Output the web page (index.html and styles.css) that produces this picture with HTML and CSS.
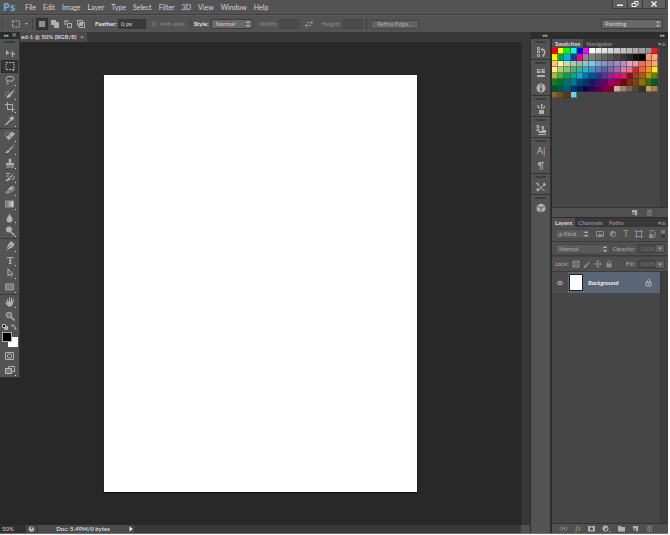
FILE: index.html
```html
<!DOCTYPE html>
<html lang="en">
<head>
<meta charset="utf-8">
<title>Photoshop</title>
<link rel="stylesheet" href="styles.css">
</head>
<body>
<div class="app">
  <header class="menubar">
    <span class="logo">Ps</span>
    <nav class="menus">
      <a href="#">File</a><a href="#">Edit</a><a href="#">Image</a><a href="#">Layer</a><a href="#">Type</a><a href="#">Select</a><a href="#">Filter</a><a href="#">3D</a><a href="#">View</a><a href="#">Window</a><a href="#">Help</a>
    </nav>
    <div class="winbtns">
      <button aria-label="Minimize"><svg width="8" height="8" viewBox="0 0 8 8"><path d="M1 4.500h6v1.500h-6z"/></svg></button>
      <button aria-label="Restore"><svg width="8" height="8" viewBox="0 0 8 8"><path class="ln" d="M3.500 3V1.500h3.500v3.500H5.500M1 3.500h4v3H1z"/></svg></button>
      <button class="close" aria-label="Close"><svg width="8" height="8" viewBox="0 0 8 8"><path class="ln thick" d="M1.500 1.500l5 5M6.500 1.500l-5 5"/></svg></button>
    </div>
  </header>

  <div class="options">
    <span class="grip"></span>
    <button class="preset" aria-label="Tool preset"><svg width="20" height="10" viewBox="0 0 20 10"><rect class="ln dash" x="3.500" y="2" width="7" height="6"/><path d="M16 4h3l-1.500 2z"/></svg></button>
    <span class="sep"></span>
    <div class="modes">
      <button class="on" aria-label="New selection"><svg width="8" height="8" viewBox="0 0 8 8"><rect class="gray" x="1" y="1" width="6" height="6"/></svg></button>
      <button aria-label="Add to selection"><svg width="8" height="8" viewBox="0 0 8 8"><path d="M0 0h5v2h3v6H3V5H0z"/></svg></button>
      <button aria-label="Subtract from selection"><svg width="8" height="8" viewBox="0 0 8 8"><path class="dim" d="M0 0h5v2H2.500v3H0z"/><path class="ln" d="M3.500 3.500h4v4h-4z"/></svg></button>
      <button aria-label="Intersect with selection"><svg width="8" height="8" viewBox="0 0 8 8"><path class="ln" d="M.500 .500h5v5h-5zM2.500 2.500h5v5h-5z"/><path d="M3 3h2v2H3z"/></svg></button>
    </div>
    <label class="strong" for="feather">Feather:</label>
    <input class="field feather" id="feather" type="text" value="0 px">
    <label class="check off"><input type="checkbox" disabled>Anti-alias</label>
    <span class="sep"></span>
    <label class="strong" for="style">Style:</label>
    <span class="drop style"><select id="style"><option>Normal</option></select></span>
    <label class="off" for="w">Width:</label>
    <input class="field size" id="w" type="text" disabled>
    <button class="swap" aria-label="Swap"><svg width="10" height="8" viewBox="0 0 10 8"><path class="ln dim" d="M3 2.500h5M2 5.500h5"/><path class="dim" d="M7 .500l2.500 2L7 4.500zM3 3.500L.500 5.500 3 7.500z"/></svg></button>
    <label class="off" for="h">Height:</label>
    <input class="field size" id="h" type="text" disabled>
    <span class="sep"></span>
    <button class="refine">Refine Edge...</button>
    <span class="drop workspace"><select aria-label="Workspace"><option>Painting</option></select></span>
  </div>

  <div class="work">
    <main class="doc">
      <div class="doctabs"><div class="doctab">ed-1 @ 50% (RGB/8)<button aria-label="Close tab">×</button></div></div>
      <div class="stage">
        <div class="canvas"><div class="paper"></div></div>
        <div class="vscroll"></div>
      </div>
      <div class="status">
        <span class="zoomlevel">50%</span>
        <span class="sicon"><svg width="7" height="6" viewBox="0 0 7 6"><circle cx="3.500" cy="3" r="2.800"/><path class="ink" d="M3.500 3V1h2"/></svg></span>
        <span class="info">Doc: 5.49M/0 bytes</span>
        <button class="play" aria-label="Status menu"><svg width="4" height="6" viewBox="0 0 4 6"><path d="M.500 .500L3.800 3 .500 5.500z"/></svg></button>
        <span class="corner"></span>
      </div>
    </main>

    <aside class="dock">
      <div class="strip"><span>◂◂</span></div>
      <div class="dgroup"><button aria-label="History"><svg width="10" height="10" viewBox="0 0 10 10"><path class="ln" d="M1.500 .500h2v2h-2zM1.500 4h2v1.500h-2zM1.500 7.500h2v2h-2z"/><path class="ln thick" d="M6 2.500c3.500-.500 3.500 4.500 .500 7"/><path d="M4.500 2.500L7 .500v4z"/></svg></button></div>
      <div class="dgroup"><button aria-label="Adjustments"><svg width="10" height="10" viewBox="0 0 10 10"><path d="M1 1h3.500v1H2v1h2.500v2H1zM5.500 1H9v1H7.500v1H9v2H5.500zM1 7h8v2H1z"/></svg></button>
        <button aria-label="Info"><svg width="10" height="10" viewBox="0 0 10 10"><circle cx="5" cy="5" r="4.500"/><path class="ink thick" d="M5 1.800v1.400M5 4.200v4"/></svg></button></div>
      <div class="dgroup"><button aria-label="Brushes"><svg width="10" height="10" viewBox="0 0 10 10"><path d="M3 6h5v4H3zM1 1l2 1 1 3-2-1zM5 0h1.500v5H5zM9.500 1.500L8 5H7l1-3z"/></svg></button></div>
      <div class="dgroup"><button aria-label="Clone source"><svg width="10" height="10" viewBox="0 0 10 10"><path class="ln" d="M1 .500h2v2H1zM1 4h2v2H1z"/><path d="M5.500 1h2.500l-.500 4H10v3H3V6h3zM2 9h8v1H2z"/></svg></button></div>
      <div class="dgroup"><button class="glyph" aria-label="Character">A|</button><button class="glyph" aria-label="Paragraph">¶</button></div>
      <div class="dgroup"><button aria-label="Tool presets"><svg width="10" height="10" viewBox="0 0 10 10"><path class="ln" d="M1 1.500l7.500 7.500M9 2L2 8.500"/><path d="M0 8l2-2 1.500 1.500L2 9.500zM7 1.500l2-1v1.500h1L9 4 7.500 4zM0 1l2-.500 1 2-1 1z"/></svg></button></div>
      <div class="dgroup"><button aria-label="3D"><svg width="10" height="10" viewBox="0 0 10 10"><path d="M5 .500l4.200 2L5 4.500l-4.200-2zM.700 3.200l3.800 2v4.300L.700 7.500zM9.300 3.200l-3.800 2v4.300l3.800-2z"/></svg></button></div>
    </aside>

    <aside class="panels">
      <div class="strip right"><span>▸▸</span></div>
      <section class="panel swatchpanel">
        <div class="tabs"><button class="tab active">Swatches</button><button class="tab">Navigator</button><button class="pmenu" aria-label="Panel menu">▾≡</button></div>
        <div class="pbody"><div class="swatches" id="swatches"></div><div class="pscroll"></div></div>
        <div class="pfoot">
          <button aria-label="New swatch"><svg width="7" height="7" viewBox="0 0 8 8"><path d="M1 1h6v6H4.500V4H1z"/><path d="M1 5h2.500v2z"/></svg></button>
          <button class="faded" aria-label="Delete swatch"><svg width="7" height="7" viewBox="0 0 8 8"><path class="ln" d="M1 2h6M3 1h2M2 3h4v4.500H2zM4 3v4"/></svg></button>
        </div>
      </section>
      <section class="panel layerpanel">
        <div class="tabs"><button class="tab active">Layers</button><button class="tab">Channels</button><button class="tab">Paths</button><button class="pmenu" aria-label="Panel menu">▾≡</button></div>
        <div class="lrow filter">
          <span class="drop kind"><select aria-label="Filter kind"><option>ρ Kind</option></select></span>
          <button aria-label="Pixel layers"><svg width="8" height="8" viewBox="0 0 8 8"><path class="ln" d="M.500 1.500h7v5h-7z"/><path d="M1.500 6l2-3 1 1.500 1-1L7 6z"/></svg></button>
          <button aria-label="Adjustment layers"><svg width="8" height="8" viewBox="0 0 8 8"><circle class="ln" cx="4" cy="4" r="2.800"/><path d="M2 6a2.800 2.800 0 0 1 4-4z"/></svg></button>
          <button class="tee" aria-label="Type layers">T</button>
          <button aria-label="Shape layers"><svg width="8" height="8" viewBox="0 0 8 8"><path class="ln" d="M1.500 0v8M6.500 0v8M0 1.500h8M0 6.500h8"/></svg></button>
          <button aria-label="Smart objects"><svg width="8" height="8" viewBox="0 0 8 8"><path class="ln" d="M2.500 3V.500h3l1.500 1.500v5H5"/><path d="M1 4h4v4H1z"/></svg></button>
          <button class="toggle" aria-label="Toggle filter"></button>
        </div>
        <div class="lrow blend">
          <span class="drop mode"><select aria-label="Blend mode"><option>Normal</option></select></span>
          <label class="fill" for="opacity">Opacity:</label>
          <span class="pct"><input id="opacity" type="text" value="100%" disabled><button aria-label="Opacity slider">▾</button></span>
        </div>
        <div class="lrow lock">
          <span>Lock:</span>
          <button aria-label="Lock pixels"><svg width="8" height="8" viewBox="0 0 8 8"><path class="ln" d="M1 1h6v6H1z"/><path d="M1 1h2v2H1zM5 1h2v2H5zM3 3h2v2H3zM1 5h2v2H1zM5 5h2v2H5z"/></svg></button>
          <button aria-label="Lock painting"><svg width="8" height="8" viewBox="0 0 8 8"><path d="M8 0L4.500 5.500 3 4.500zM2.500 4.500L4.500 6 2 8H0z"/></svg></button>
          <button aria-label="Lock position"><svg width="8" height="8" viewBox="0 0 8 8"><path class="ln" d="M4 1v6M1 4h6"/><path d="M4 0l1.500 2h-3zM4 8l1.500-2h-3zM0 4l2-1.500v3zM8 4L6 2.500v3z"/></svg></button>
          <button aria-label="Lock all"><svg width="8" height="8" viewBox="0 0 8 8"><path class="ln" d="M2.500 4V2.500a1.500 1.500 0 0 1 3 0V4"/><path d="M1.500 3.500h5v4h-5z"/></svg></button>
          <label class="fill" for="fill">Fill:</label>
          <span class="pct"><input id="fill" type="text" value="100%" disabled><button aria-label="Fill slider">▾</button></span>
        </div>
        <div class="pbody">
          <div class="layers">
            <div class="layer">
              <button class="eye" aria-label="Visibility"><svg width="8" height="6" viewBox="0 0 8 6"><path class="ln" d="M.500 3.500q3.500-4.500 7 0M1.500 4q2.500 2 5 0"/><circle class="gray" cx="4" cy="3" r="1.300"/></svg></button>
              <div class="lbody"><span class="thumb"></span><span class="lname">Background</span>
              <svg width="7" height="8" viewBox="0 0 7 8"><path class="ln" d="M2 3.500V2a1.500 1.500 0 0 1 3 0v1.500M1 3.500h5v3.500H1zM3.500 4.500v1.500"/></svg></div>
            </div>
          </div>
          <div class="pscroll"></div>
        </div>
        <div class="pfoot lfoot">
          <button class="faded" aria-label="Link"><svg width="9" height="7" viewBox="0 0 9 7"><path class="ln" d="M4 2H2.500a1.500 1.500 0 0 0 0 3H4M5 2h1.500a1.500 1.500 0 0 1 0 3H5M3 3.500h3"/></svg></button>
          <button class="faded fx" aria-label="Layer style">fx</button>
          <button aria-label="Mask"><svg width="7" height="7" viewBox="0 0 7 7"><path d="M0 1h7v5.500H0z"/><circle class="hole" cx="3.500" cy="3.700" r="1.500"/></svg></button>
          <button aria-label="Adjustment"><svg width="9" height="7" viewBox="0 0 9 7"><circle cx="3.500" cy="3.500" r="3"/><path class="hole" d="M5 2.200A2 2 0 0 1 2.200 5z"/><path d="M7.500 6h1v1h-1z"/></svg></button>
          <button aria-label="Group"><svg width="7" height="7" viewBox="0 0 7 7"><path d="M0 1h3l1 1h3v4.500H0z"/></svg></button>
          <button aria-label="New layer"><svg width="7" height="7" viewBox="0 0 8 8"><path d="M1 1h6v6H4.500V4H1z"/><path d="M1 5h2.500v2z"/></svg></button>
          <button class="faded" aria-label="Delete layer"><svg width="7" height="7" viewBox="0 0 8 8"><path class="ln" d="M1 2h6M3 1h2M2 3h4v4.500H2zM4 3v4"/></svg></button>
        </div>
      </section>
    </aside>

    <div class="tools">
      <div class="thead"><span>▸▸</span><button aria-label="Close tools">×</button></div>
      <div class="tgrip"></div>
      <div class="tgroup g6">
        <button class="plain" aria-label="Move"><svg width="12" height="10" viewBox="0 0 12 10"><path d="M2 2l4 3.500H4L2 7.500z"/><path class="ln" d="M8.500 3.500v5M6.500 6h4"/><path d="M8.500 3l1 1h-2zM8.500 9l1-1h-2zM11 6L10 5v2z"/></svg></button>
        <button class="on" aria-label="Marquee"><svg width="12" height="10" viewBox="0 0 12 10"><rect class="ln dash" x="2" y="1.500" width="8" height="7"/></svg></button>
        <button aria-label="Lasso"><svg width="12" height="10" viewBox="0 0 12 10"><ellipse class="ln" cx="6" cy="3.800" rx="4" ry="2.500"/><path class="ln" d="M3.500 5.500q-2 1 0 2t-1 2"/></svg></button>
        <button aria-label="Quick selection"><svg width="12" height="10" viewBox="0 0 12 10"><path d="M11 0L7.500 5.500 5.500 4.500zM5 4.500l2.500 1.500-2 2.500-3.500 .500z"/><path class="ln dim" d="M5 2.500C1 2 1 6 2.500 7.500"/></svg></button>
        <button aria-label="Crop"><svg width="12" height="10" viewBox="0 0 12 10"><path class="ln" d="M3.500 0v7.500h7M1 2.500h7.500V10"/></svg></button>
        <button aria-label="Eyedropper"><svg width="12" height="10" viewBox="0 0 12 10"><path d="M8 0l2.500 2L8 5 5 2.500z"/><path class="ln thick" d="M6.500 4L3 7.500 1.500 9"/></svg></button>
      </div>
      <div class="tgroup g8">
        <button aria-label="Healing brush"><svg width="12" height="10" viewBox="0 0 12 10"><path d="M8 .500l3 2.500-6 6-3-2.500z"/><path class="ln dim" d="M5.500 1.500C2 0 0 4 2 6"/><path class="ink thin" d="M5 4l2 2"/></svg></button>
        <button aria-label="Brush"><svg width="12" height="10" viewBox="0 0 12 10"><path d="M11 0L6.500 6 5 5zM4.500 5.500L6 7 3.500 9 1 9z"/></svg></button>
        <button aria-label="Clone stamp"><svg width="12" height="10" viewBox="0 0 12 10"><path d="M4.500 2a1.500 1.500 0 0 1 3 0L7 5h3v2.500H2V5h3zM2 8.500h8v1H2z"/></svg></button>
        <button aria-label="History brush"><svg width="12" height="10" viewBox="0 0 12 10"><path d="M10 1L7 6 5.500 5zM5 5.500L7 7 4 9H1z"/><path class="ln" d="M2 1.500h4M2 4h3M8 8q3-1 2-4"/></svg></button>
        <button aria-label="Eraser"><svg width="12" height="10" viewBox="0 0 12 10"><path d="M6.500 1.500h4L7.500 5h-4z"/><path class="gray" d="M3 5.500h4L5 8.500H1zM11 2.500v2L6 8.500 7.500 5.500z"/></svg></button>
        <button aria-label="Gradient"><svg width="12" height="10" viewBox="0 0 12 10"><defs><linearGradient id="g"><stop stop-color="#666"/><stop offset="1" stop-color="#ddd"/></linearGradient></defs><rect x="1.500" y="2" width="8" height="6" fill="url(#g)" stroke="#999"/></svg></button>
        <button aria-label="Blur"><svg width="12" height="10" viewBox="0 0 12 10"><path d="M5.500 .500C7 3.500 8.500 5 8.500 6.500a3 3 0 0 1-6 0C2.500 5 4.500 3.500 5.500 .500z"/></svg></button>
        <button aria-label="Dodge"><svg width="12" height="10" viewBox="0 0 12 10"><circle cx="5" cy="3.500" r="3"/><path class="ln thick" d="M7 6l3.500 3.500"/></svg></button>
      </div>
      <div class="tgroup g4">
        <button aria-label="Pen"><svg width="12" height="10" viewBox="0 0 12 10"><path d="M7 0l3.500 3L9 6 2 9.500 4.500 3z"/><path class="ink thin" d="M2 9l4-4"/><path class="hole" d="M6 4h1v1H6z"/></svg></button>
        <button class="type" aria-label="Type">T</button>
        <button aria-label="Path selection"><svg width="12" height="10" viewBox="0 0 12 10"><path class="ln" d="M4 .800l5 5.500H6.500L7.500 9M4 .800v7L6 6"/></svg></button>
        <button aria-label="Rectangle"><svg width="12" height="10" viewBox="0 0 12 10"><rect x="1.500" y="2" width="8" height="6" fill="#7c7c7c" stroke="#999"/></svg></button>
      </div>
      <div class="tgroup g2">
        <button aria-label="Hand"><svg width="12" height="10" viewBox="0 0 12 10"><path class="ln" d="M3.500 2l.500 4M5.500 .500V5M7.500 .500V5M9.500 2L8.500 6M1 5l2.500 2"/><path d="M3.500 4.500h6L8.500 8 7 9.500H4.500L2 7z"/></svg></button>
        <button class="plain" aria-label="Zoom"><svg width="12" height="10" viewBox="0 0 12 10"><circle class="ln dimfill" cx="5" cy="4" r="2.800"/><path class="ln thick" d="M7 6l3.500 3.500"/></svg></button>
      </div>
      <div class="mini">
        <button aria-label="Default colors"><svg width="6" height="6" viewBox="0 0 6 6"><path d="M2 2h4v4H2z"/><path fill="#111" stroke="#bbb" d="M.500 .500h3v3h-3z"/></svg></button>
        <button aria-label="Switch colors"><svg width="6" height="6" viewBox="0 0 6 6"><path class="ln" d="M1.500 1.500q3 0 3 3"/><path d="M0 1.500L2 0v3zM4.500 6L3 4h3z"/></svg></button>
      </div>
      <div class="colors"><span class="bg"></span><span class="fg"></span></div>
      <div class="tgroup g2">
        <button class="plain" aria-label="Quick mask"><svg width="12" height="10" viewBox="0 0 12 10"><path class="ln" d="M1.500 1.500h8v7h-8z"/><circle class="ln" cx="5.500" cy="5" r="2.200"/></svg></button>
        <button aria-label="Screen mode"><svg width="12" height="10" viewBox="0 0 12 10"><path class="ln" d="M4.500 1.500h6v5h-6z"/><path fill="#777" stroke="#bbb" d="M1.500 3.500h6v5h-6z"/></svg></button>
      </div>
    </div>
  </div>
  <div class="edge"></div>
</div>
<script src="swatches.js"></script>
</body>
</html>
```

FILE: swatches.js
```js
const colors = [
  "ff0000 ffff00 00ff00 00ffff 0000ff ff00ff ffffff ebebeb e1e1e1 d7d7d7 cccccc c2c2c2 b7b7b7 acacac a1a1a1 959595 ed1c24",
  "fff200 00a651 00aeef 2e3192 ec008c 898989 7d7d7d 707070 626262 555555 464646 363636 262626 111111 000000 f7977a f9ad81",
  "fdc68a fff79a c4df9b a2d39c 82ca9d 7bcdc8 6ecff6 7ea7d8 8493ca 8882be a187be bc8dbf f49ac2 f6989d f26c4f f68e55 fbaf5c",
  "fff467 acd372 7cc576 3bb878 1abbb4 00bff3 438cca 5574b9 605ca8 855fa8 a763a8 f06ea9 f26d7d ed1c24 f26522 f7941d fff200",
  "8dc73f 39b54a 00a651 00a99d 00aeef 0072bc 0054a6 2e3192 662d91 92278f ec008c ed145b 9e0b0f a0410d a36209 aba000 598527",
  "1a7b30 007236 00746b 0076a3 004b80 003471 1b1464 440e62 630460 9e005d 9e0039 790000 7b2e00 7d4900 827b00 406618 005e20",
  "005826 005952 005b7f 003663 002157 0d004c 32004b 4b0049 7b0046 7a0026 c7b299 998675 736357 534741 37302d c69c6e a67c52",
  "8c6239 754c24 603913 6dcff6"
].join(" ").split(" ");

const grid = document.getElementById("swatches");
for (const c of colors) {
  const cell = document.createElement("span");
  cell.style.backgroundColor = "#" + c;
  grid.append(cell);
}
```

FILE: styles.css
```css
* { box-sizing: border-box; }
body { margin: 0; background: #fff; }
.app {
  height: 100vh;
  padding: 0 2px 1px 0;
  display: flex;
  flex-direction: column;
  font: 6px/8px Lato, "Noto Sans", sans-serif;
  color: #d6d6d6;
}
button, input, select { font: inherit; color: inherit; margin: 0; padding: 0; border: 0; background: none; border-radius: 0; }
button { display: flex; align-items: center; justify-content: center; }
a { color: inherit; text-decoration: none; }
svg { display: block; fill: #b0b0b0; flex: none; }
.ln { fill: none; stroke: #b0b0b0; }
.thick { stroke-width: 1.5; }
.thin { stroke-width: .7; }
.dash { stroke-dasharray: 2 1; }
.ink { fill: none; stroke: #444; }
.hole { fill: #444; }
.gray { fill: #909090; }
.dim { fill: #8a8a8a; }
.ln.dim { fill: none; stroke: #8a8a8a; }
.ln.dimfill { fill: #777; }

.menubar { height: 15px; flex: none; display: flex; background: #535353; border-bottom: 1px solid #404040; }
.logo { width: 25px; padding-left: 3px; font: bold 11px/13px "Open Sans", sans-serif; color: #73a5d8; }
.menus { display: flex; gap: 7px; font-size: 7px; line-height: 14px; flex: 1; }
.winbtns { display: flex; height: 9px; margin-right: 2px; border: 1px solid #3c3c3c; border-top: 0; background: #606060; }
.winbtns button { width: 15px; border-right: 1px solid #3c3c3c; }
.winbtns .close { width: 22px; border-right: 0; }
.winbtns svg { fill: #eee; }
.winbtns .ln { stroke: #eee; }

.options { height: 17px; flex: none; display: flex; align-items: center; background: #535353; border-top: 1px solid #5c5c5c; }
.grip { width: 2px; height: 10px; margin: 0 5px 0 2px; border-left: 1px solid #404040; }
.sep { width: 1px; height: 12px; margin: 0 3px; background: #404040; }
.modes { display: flex; gap: 1px; margin-right: 8px; }
.modes button { width: 12px; height: 12px; }
.modes .on { background: #383838; border: 1px solid #2e2e2e; }
.strong { color: #e6e6e6; font-weight: bold; }
.off { color: #8c8c8c; }
.field { height: 10px; background: #3a3a3a; border: 1px solid #353535; padding: 0 0 1px 2px; }
.feather { width: 28px; margin: 0 5px 0 1px; }
.size { width: 20px; background: #4a4a4a; border-color: #454545; margin-left: 2px; }
.check { display: flex; align-items: center; gap: 3px; margin-right: 2px; }
.check input { appearance: none; flex: none; width: 6px; height: 6px; background: #646464; border: 1px solid #5a5a5a; }
.drop { position: relative; display: flex; height: 10px; background: #686868; border: 1px solid #3c3c3c; border-radius: 1px; }
.drop select { appearance: none; width: 100%; padding-left: 3px; line-height: 8px; outline: 0; }
.drop::before, .drop::after { content: ""; position: absolute; right: 2px; border: 1px solid transparent; border-left-width: 2px; border-right-width: 2px; pointer-events: none; }
.drop::before { top: 1px; border-bottom: 2px solid #bbb; border-top: 0; }
.drop::after { bottom: 1px; border-top: 2px solid #bbb; border-bottom: 0; }
.style { width: 42px; margin: 0 6px 0 3px; }
.swap { margin: 0 7px 0 5px; }
.refine { width: 48px; height: 9px; margin-left: 1px; color: #aaa; background: #626262; border: 1px solid #444; border-radius: 1px; }
.workspace { width: 62px; margin: 0 5px 0 auto; }

.work { position: relative; flex: 1; min-height: 0; display: flex; background: #2d2d2d; }
.doc { flex: 1; min-width: 0; display: flex; flex-direction: column; }
.doctabs { height: 10px; flex: none; display: flex; background: #393939; }
.doctab { display: flex; align-items: center; gap: 4px; padding: 0 3px 0 21px; background: #4a4a4a; line-height: 10px; font-weight: bold; }
.doctab button { color: #aaa; line-height: 8px; }
.stage { flex: 1; min-height: 0; display: flex; }
.canvas { flex: 1; background: #282828; padding: 33px 104px; }
.paper { height: 417px; background: #fff; box-shadow: 0 1px 1px #111; }
.vscroll { width: 9px; background: #373737; border-left: 1px solid #303030; }
.status { height: 8px; flex: none; display: flex; background: #393939; }
.zoomlevel { width: 26px; padding-left: 2px; background: #303030; }
.sicon { width: 12px; display: flex; align-items: center; justify-content: center; background: #484848; border-right: 1px solid #333; }
.info { width: 90px; text-align: center; background: #4c4c4c; font-weight: bold; }
.play { width: 6px; background: #484848; }
.play svg { fill: #eee; }
.corner { width: 9px; margin-left: auto; background: #505050; }

.strip { height: 7px; flex: none; padding: 0 3px; background: #2d2d2d; color: #bbb; font: 5px/7px "DejaVu Sans", sans-serif; text-align: right; }
.dock { width: 21px; background: #535353; border: solid #2e2e2e; border-width: 0 1px; }
.dgroup { padding: 2px 0 0; border-bottom: 1px solid #333; }
.dgroup::before { content: ""; display: block; width: 11px; height: 2px; margin: 0 auto 1px 4px; background: #3c3c3c; }
.dgroup button { width: 20px; height: 15px; }
.dgroup .glyph { color: #b8b8b8; font: 9px/14px Lato, sans-serif; }
.dgroup:last-child { border: 0; }

.panels { width: 117px; display: flex; flex-direction: column; padding-left: 1px; }
.panel { display: flex; flex-direction: column; background: #464646; }
.swatchpanel { height: 179px; border-bottom: 1px solid #2d2d2d; }
.layerpanel { flex: 1; min-height: 0; }
.tabs { height: 9px; flex: none; display: flex; background: #383838; font-weight: bold; }
.tab { padding: 0 3px; color: #8c8c8c; }
.active { background: #505050; color: #dedede; }
.pmenu { margin: 0 2px 0 auto; font: 6px/8px "DejaVu Sans", sans-serif; color: #999; }
.pbody { flex: 1; min-height: 0; display: flex; align-items: flex-start; background: #464646; }
.swatches { width: 106px; height: 50px; display: grid; grid-template-columns: repeat(17, 1fr); grid-template-rows: repeat(8, 1fr); }
.swatches span { border: solid rgba(50, 50, 50, .5); border-width: 0 1px 1px 0; }
.pscroll { width: 8px; height: 100%; margin-left: auto; background: #3e3e3e; border-left: 1px solid #383838; }
.pfoot { height: 10px; flex: none; display: flex; align-items: center; justify-content: flex-end; gap: 8px; padding-right: 15px; background: #505050; border-top: 1px solid #333; }
.faded { opacity: .5; }
.fx { font: italic 8px/8px "Liberation Serif", serif; }

.lrow { flex: none; display: flex; align-items: center; padding: 0 3px; background: #505050; color: #b0b0b0; border-bottom: 1px solid #3c3c3c; }
.lrow .drop { background: #5a5a5a; border-color: #484848; }
.lrow svg { fill: #8c8c8c; }
.lrow .ln { stroke: #8c8c8c; fill: none; }
.filter { height: 15px; gap: 4px; justify-content: space-between; }
.kind { width: 36px; }
.tee { width: 8px; color: #999; font-size: 9px; }
.toggle { width: 4px; height: 8px; background: #3a3a3a; border-top: 4px solid #777; }
.blend { height: 14px; gap: 3px; }
.mode { width: 57px; }
.pct { display: flex; height: 9px; border: 1px solid #404040; color: #787878; }
.pct input { width: 17px; padding-left: 1px; background: #464646; }
.pct button { width: 8px; background: #606060; color: #bbb; font: 5px/7px "DejaVu Sans", sans-serif; }
.lock { height: 16px; gap: 3px; border-top: 1px solid #444; }
.fill { margin-left: auto; }
.layers { flex: 1; }
.layer { display: flex; height: 21px; background: #4c4c4c; }
.eye { width: 16px; }
.lbody { flex: 1; display: flex; align-items: center; background: #586678; padding: 0 8px 0 1px; color: #eee; }
.thumb { width: 14px; height: 17px; background: #fff; border: 1px solid #222; margin-right: 5px; }
.lname { flex: 1; font-style: italic; font-weight: bold; }
.lfoot { gap: 7px; }

.tools { position: absolute; left: 0; top: 0; width: 20px; background: #535353; border: solid #333; border-width: 0 1px 1px 0; }
.thead { height: 7px; display: flex; justify-content: space-between; padding: 0 2px 0 4px; background: #2b2b2b; color: #bbb; font: 5px/7px "DejaVu Sans", sans-serif; }
.thead button { font-size: 7px; line-height: 7px; }
.tgrip { height: 2px; margin: 2px 4px 3px; background: #3a3a3a; }
.tgroup { display: grid; grid-auto-rows: 1fr; border-bottom: 1px solid #3a3a3a; }
.tgroup button { position: relative; padding-left: 1px; }
.tgroup button::after { content: ""; position: absolute; right: 3px; bottom: 1px; width: 1px; height: 1px; background: #ddd; }
.tgroup .plain::after { display: none; }
.tgroup .on { margin: 0 1px; background: #353535; border: 1px solid #2a2a2a; padding: 0; }
.g6 { height: 83px; }
.g8 { height: 110px; }
.g4 { height: 56px; }
.g2 { height: 28px; border-bottom: 0; }
.tools .type { font: 11px/12px "Liberation Serif", serif; color: #ccc; }
.mini { display: flex; justify-content: space-between; padding: 1px 2px 2px; }
.colors { display: grid; grid-template-columns: 6px 4px 6px; grid-template-rows: 5px 5px 5px; padding-left: 2px; margin-bottom: 2px; }
.colors .bg { grid-area: 2 / 2 / 4 / 4; background: #fff; }
.colors .fg { grid-area: 1 / 1 / 3 / 3; background: #000; border: 1px solid #aaa; }
.edge { height: 1px; flex: none; background: #716c70; }
```
